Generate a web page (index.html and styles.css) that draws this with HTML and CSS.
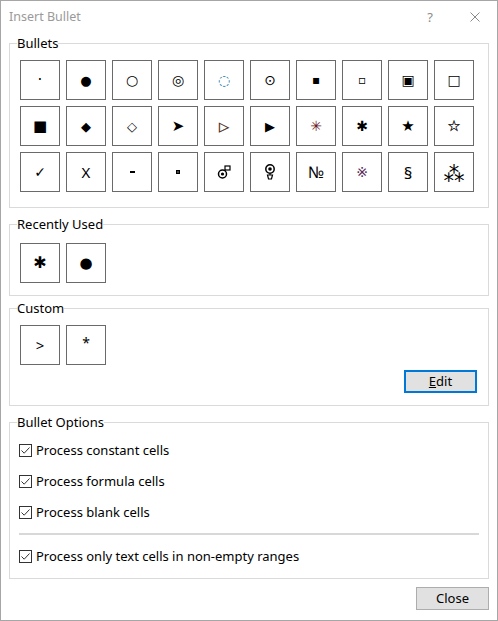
FILE: index.html
```html
<!DOCTYPE html>
<html>
<head>
<meta charset="utf-8">
<link rel="stylesheet" href="styles.css">
</head>
<body>
<div class="window">
  <div class="titlebar">
    <span class="title">Insert Bullet</span>
    <span class="help">?</span>
    <svg class="closex" width="10" height="10" viewBox="0 0 10 10"><path d="M0.5 0.5L9.5 9.5M9.5 0.5L0.5 9.5" stroke="#8a8a8a" stroke-width="1" fill="none"/></svg>
  </div>

  <fieldset class="group g-bullets">
    <legend>Bullets</legend>
    <div class="grid">
      <div class="cell"><span class="s s-middot">·</span></div>
      <div class="cell"><span class="s s-dot">●</span></div>
      <div class="cell"><span class="s s-circ">○</span></div>
      <div class="cell"><span class="s s-circ">◎</span></div>
      <div class="cell"><span class="s s-circ blue">◌</span></div>
      <div class="cell"><span class="s s-circ">⊙</span></div>
      <div class="cell"><span class="s s-small">▪</span></div>
      <div class="cell"><span class="s s-small">▫</span></div>
      <div class="cell"><span class="s s-sq">▣</span></div>
      <div class="cell"><span class="s s-sq">□</span></div>

      <div class="cell"><span class="s s-bigsq">■</span></div>
      <div class="cell"><span class="s s-dia">◆</span></div>
      <div class="cell"><span class="s s-dia">◇</span></div>
      <div class="cell"><span class="s s-arrow">➤</span></div>
      <div class="cell"><span class="s s-tri brown">▷</span></div>
      <div class="cell"><span class="s s-tri">▶</span></div>
      <div class="cell"><span class="s s-ast maroon">✳</span></div>
      <div class="cell"><span class="s s-ast">✱</span></div>
      <div class="cell"><span class="s s-star">★</span></div>
      <div class="cell"><span class="s s-star s-wstar">☆</span></div>

      <div class="cell"><span class="s s-check">✓</span></div>
      <div class="cell"><span class="s s-x">X</span></div>
      <div class="cell"><span class="s s-dash"></span></div>
      <div class="cell"><span class="s s-tiny"></span></div>
      <div class="cell">
        <svg class="icon" width="14" height="14" viewBox="0 0 14 14">
          <rect x="8" y="1" width="5" height="4" fill="#fff" stroke="#000" stroke-width="1.2"/>
          <path d="M8.5 5 L7.5 6" stroke="#000" stroke-width="1.5"/>
          <circle cx="5.5" cy="9" r="4" fill="#fff" stroke="#000" stroke-width="1.5"/>
          <circle cx="5.5" cy="9" r="1.6" fill="#000"/>
        </svg>
      </div>
      <div class="cell">
        <svg class="icon" width="14" height="16" viewBox="0 0 14 16">
          <circle cx="7" cy="5" r="4.2" fill="#fff" stroke="#000" stroke-width="1.5"/>
          <circle cx="7" cy="5" r="1.8" fill="#000"/>
          <path d="M7 9.5 V11 M4.5 11 H9.5 L8.5 15 H5.5 Z" fill="#fff" stroke="#000" stroke-width="1.2"/>
        </svg>
      </div>
      <div class="cell"><span class="s s-no">№</span></div>
      <div class="cell"><span class="s s-ref purple">※</span></div>
      <div class="cell"><span class="s s-sect">§</span></div>
      <div class="cell"><span class="s s-asterism">⁂</span></div>
    </div>
  </fieldset>

  <fieldset class="group g-recent">
    <legend>Recently Used</legend>
    <div class="row">
      <div class="cell"><span class="s s-ast2">✱</span></div>
      <div class="cell"><span class="s s-dot2">●</span></div>
    </div>
  </fieldset>

  <fieldset class="group g-custom">
    <legend>Custom</legend>
    <div class="row">
      <div class="cell"><span class="s s-gt">&gt;</span></div>
      <div class="cell"><span class="s s-star2">*</span></div>
    </div>
    <div class="btnrow">
      <button class="btn btn-edit"><u>E</u>dit</button>
    </div>
  </fieldset>

  <fieldset class="group g-options">
    <legend>Bullet Options</legend>
    <div class="opts">
      <label class="opt"><span class="cb"><svg width="11" height="11" viewBox="0 0 11 11"><path d="M1.5 5.5 L4.2 8.2 L9.5 2.5" stroke="#333" stroke-width="1" fill="none"/></svg></span>Process constant cells</label>
      <label class="opt"><span class="cb"><svg width="11" height="11" viewBox="0 0 11 11"><path d="M1.5 5.5 L4.2 8.2 L9.5 2.5" stroke="#333" stroke-width="1" fill="none"/></svg></span>Process formula cells</label>
      <label class="opt"><span class="cb"><svg width="11" height="11" viewBox="0 0 11 11"><path d="M1.5 5.5 L4.2 8.2 L9.5 2.5" stroke="#333" stroke-width="1" fill="none"/></svg></span>Process blank cells</label>
      <div class="sep"></div>
      <label class="opt"><span class="cb"><svg width="11" height="11" viewBox="0 0 11 11"><path d="M1.5 5.5 L4.2 8.2 L9.5 2.5" stroke="#333" stroke-width="1" fill="none"/></svg></span>Process only text cells in non-empty ranges</label>
    </div>
  </fieldset>

  <div class="footer">
    <button class="btn btn-close">Close</button>
  </div>
</div>
</body>
</html>
```

FILE: styles.css
```css
* { box-sizing: border-box; }
html, body { margin: 0; padding: 0; background: #fff; }
body {
  font-family: "Noto Sans", "Open Sans", "DejaVu Sans", sans-serif;
  font-size: 13px;
  color: #000;
}
.window {
  width: 498px;
  height: 621px;
  border: 1px solid #a6a6a6;
  background: #fff;
  display: flex;
  flex-direction: column;
}
.titlebar {
  height: 34px;
  display: flex;
  align-items: center;
  padding-left: 8px;
  padding-bottom: 3px;
}
.title {
  color: #9a9a9a;
  font-size: 12.5px;
  flex: 1;
}
.help {
  color: #8a8a8a;
  font-size: 13px;
  margin-right: 37px;
}
.closex { margin-right: 17px; margin-top: 1px; }

.group {
  margin: 0 0 0 8px;
  width: 480px;
  border: 1px solid #dadada;
  padding: 0;
  min-width: 0;
}
.group legend {
  padding: 0;
  margin-left: 7px;
  font-size: 13px;
  line-height: 16px;
  height: 16px;
}
.g-bullets { padding: 9px 0 15px 0; }
.g-recent { margin-top: 8px; padding: 11px 0 12px 0; }
.g-custom { margin-top: 4px; padding: 9px 0 12px 0; }
.g-options { margin-top: 8px; padding: 10px 0 12px 0; }

.grid {
  display: grid;
  grid-template-columns: repeat(10, 40px);
  grid-auto-rows: 40px;
  gap: 6px;
  margin-left: 10px;
}
.row { display: flex; gap: 6px; margin-left: 10px; }
.cell {
  width: 40px;
  height: 40px;
  border: 1px solid #6a6a6a;
  display: flex;
  align-items: center;
  justify-content: center;
  background: #fff;
}
.s {
  font-family: "DejaVu Sans", sans-serif;
  line-height: 1;
  display: block;
}
.s-middot { font-size: 15px; }
.s-dot { font-size: 13px; }
.s-circ { font-size: 14px; }
.s-small { font-size: 12px; }
.s-sq { font-size: 14px; }
.s-bigsq { font-size: 15px; }
.s-dia { font-size: 13px; }
.s-arrow { font-size: 15px; }
.s-tri { font-size: 13px; }
.s-ast { font-size: 14px; }
.s-star { font-size: 15px; }
.s-wstar { color: #1a1a1a; -webkit-text-stroke: 0.3px #000; }
.s-check { font-size: 14px; }
.s-x { font-family: "Noto Sans", sans-serif; font-size: 15px; font-weight: 400; color: #000; }
.s-dash { width: 5px; height: 2px; background: #000; }
.s-tiny { width: 4px; height: 4px; border: 1px solid #000; background: #444; }
.s-no { font-family: "Noto Sans", sans-serif; font-size: 16px; }
.s-ref { font-size: 14px; }
.s-sect { font-family: "Noto Sans", sans-serif; font-size: 17px; }
.s-asterism { font-size: 21px; line-height: 22px; padding-top: 4px; }
.s-ast2 { font-size: 16px; }
.s-dot2 { font-size: 15px; }
.s-gt { font-family: "Noto Sans", sans-serif; font-size: 15px; }
.s-star2 { font-family: "Noto Sans", sans-serif; font-size: 14px; margin-top: -5px; }
.blue { color: #1f78a8; }
.brown { color: #3e2010; -webkit-text-stroke: 0.3px #3e2010; }
.maroon { color: #6a1a2a; }
.purple { color: #5a2a5a; }
.icon { display: block; }

.btnrow {
  display: flex;
  justify-content: flex-end;
  margin-top: 5px;
  margin-right: 11px;
}
.btn {
  font-family: "Noto Sans", sans-serif;
  font-size: 13px;
  color: #000;
  background: #e1e1e1;
  width: 73px;
  height: 23px;
  padding: 0;
  line-height: 1;
}
.btn-edit { border: 2px solid #0078d7; }
.btn-close { border: 1px solid #adadad; }

.opts { padding-left: 8px; padding-right: 9px; }
.opt {
  display: flex;
  align-items: center;
  height: 20px;
  margin-bottom: 11px;
  font-size: 13px;
}
.opt:last-child { margin-bottom: 0; }
.cb {
  width: 13px;
  height: 13px;
  border: 1px solid #333;
  display: flex;
  align-items: center;
  justify-content: center;
  margin-left: 1px;
  margin-right: 4px;
  background: #fff;
}
.cb svg { display: block; }
.sep {
  height: 2px;
  background: #d8d8d8;
  margin: 0 0 11px 1px;
  width: 460px;
}
.footer {
  display: flex;
  justify-content: flex-end;
  margin-top: 8px;
  padding-right: 8px;
}
```
